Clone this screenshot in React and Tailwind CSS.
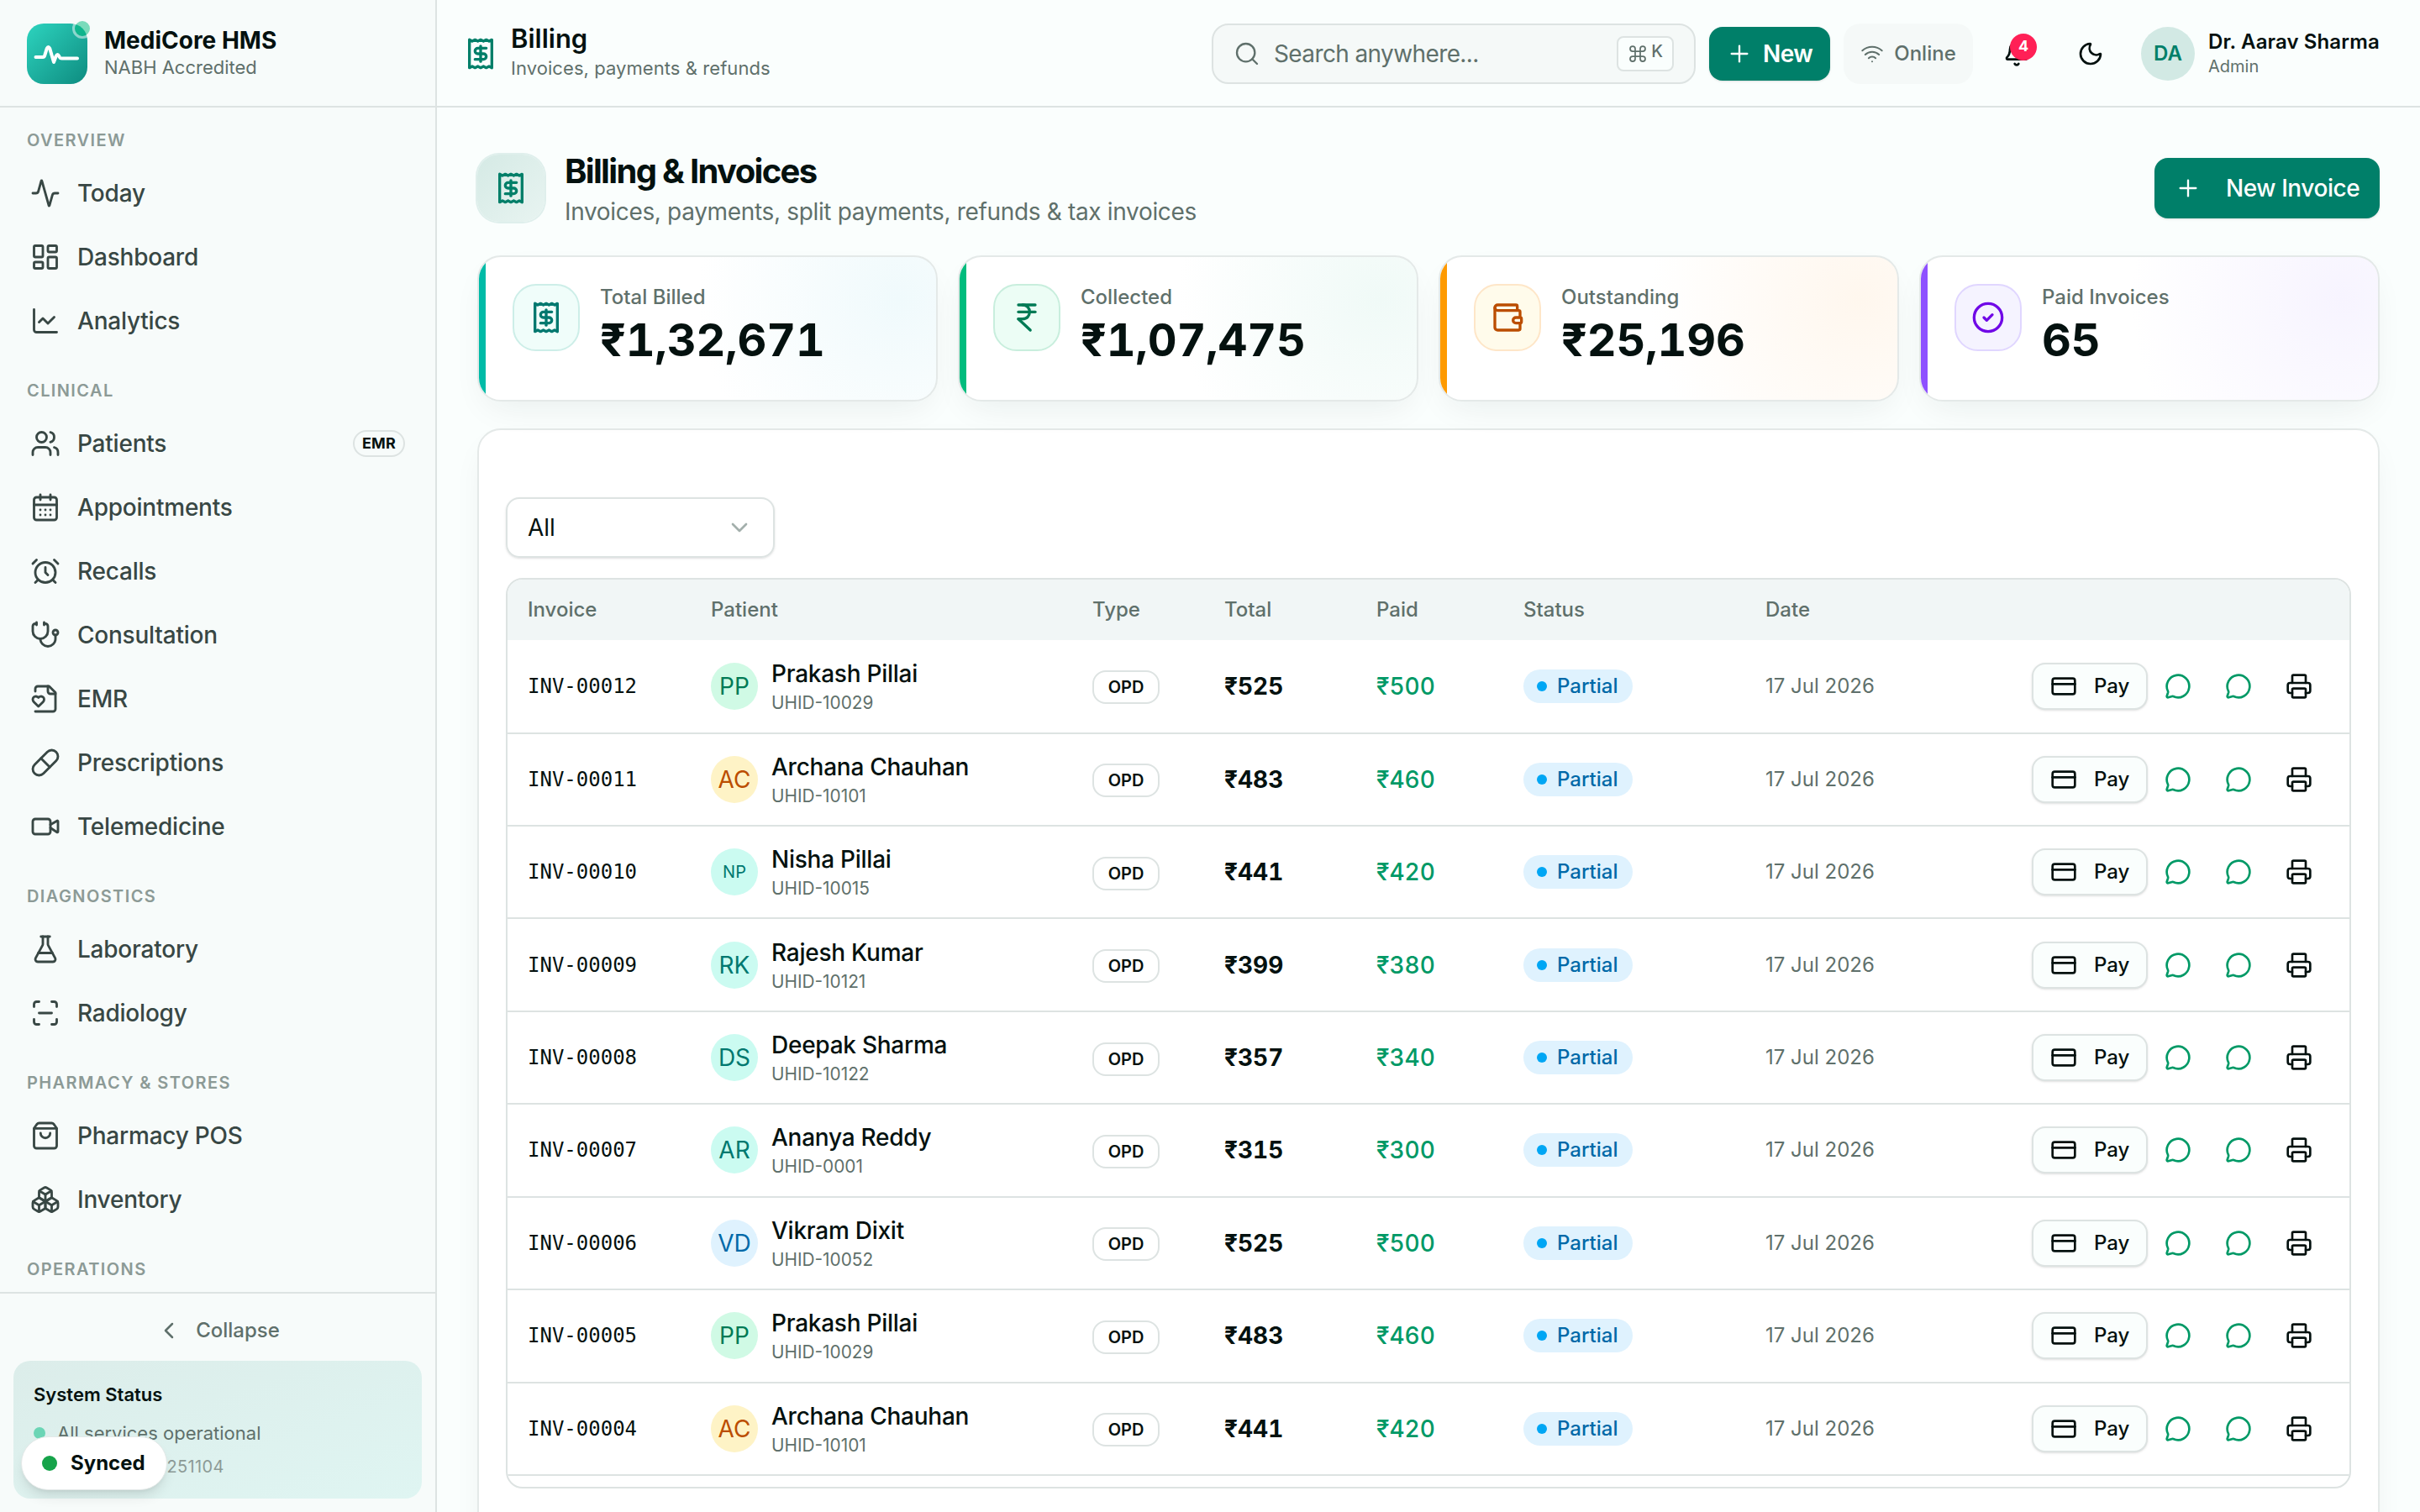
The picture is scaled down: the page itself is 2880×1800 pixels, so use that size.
import {
  Activity,
  AlarmClock,
  Bell,
  Boxes,
  CalendarDays,
  ChartLine,
  ChevronDown,
  ChevronLeft,
  CircleCheck,
  Command,
  CreditCard,
  FlaskConical,
  IndianRupee,
  LayoutDashboard,
  MessageCircle,
  Moon,
  Pill,
  Plus,
  Printer,
  Receipt,
  ScanLine,
  Search,
  Stethoscope,
  Users,
  Video,
  Wallet,
  Wifi,
} from "lucide-react";

// These two differ from the lucide versions, so they are drawn here
function FileHeart({ className, strokeWidth = 2 }) {
  return (
    <svg
      viewBox="0 0 24 24"
      fill="none"
      stroke="currentColor"
      strokeWidth={strokeWidth}
      strokeLinecap="round"
      strokeLinejoin="round"
      className={className}
    >
      <path d="M4 22h14a2 2 0 0 0 2-2V7l-5-5H6a2 2 0 0 0-2 2v2" />
      <path d="M14 2v4a2 2 0 0 0 2 2h4" />
      <path d="M10.29 10.7a2.43 2.43 0 0 0-2.66-.52c-.29.12-.56.3-.78.53l-.35.34-.35-.34a2.43 2.43 0 0 0-2.65-.53c-.3.12-.56.3-.79.53-.95.94-1 2.53.2 3.74L6.5 18l3.6-3.55c1.2-1.21 1.14-2.8.19-3.74Z" />
    </svg>
  );
}

function ShoppingBag({ className, strokeWidth = 2 }) {
  return (
    <svg
      viewBox="0 0 24 24"
      fill="none"
      stroke="currentColor"
      strokeWidth={strokeWidth}
      strokeLinecap="round"
      strokeLinejoin="round"
      className={className}
    >
      <path d="M3.1 6.2h17.8" />
      <path d="M3.4 5.5a2 2 0 0 0-.4 1.2V20a2 2 0 0 0 2 2h14a2 2 0 0 0 2-2V6.7a2 2 0 0 0-.4-1.2l-2-2.7A2 2 0 0 0 17 2H7a2 2 0 0 0-1.6.8z" />
      <path d="M15.8 10a3.8 3.8 0 0 1-7.6 0" />
    </svg>
  );
}

const NAV = [
  {
    title: "Overview",
    items: [
      { label: "Today", icon: Activity },
      { label: "Dashboard", icon: LayoutDashboard },
      { label: "Analytics", icon: ChartLine },
    ],
  },
  {
    title: "Clinical",
    items: [
      { label: "Patients", icon: Users, badge: "EMR" },
      { label: "Appointments", icon: CalendarDays },
      { label: "Recalls", icon: AlarmClock },
      { label: "Consultation", icon: Stethoscope },
      { label: "EMR", icon: FileHeart },
      { label: "Prescriptions", icon: Pill },
      { label: "Telemedicine", icon: Video },
    ],
  },
  {
    title: "Diagnostics",
    items: [
      { label: "Laboratory", icon: FlaskConical },
      { label: "Radiology", icon: ScanLine },
    ],
  },
  {
    title: "Pharmacy & Stores",
    items: [
      { label: "Pharmacy POS", icon: ShoppingBag },
      { label: "Inventory", icon: Boxes },
    ],
  },
  { title: "Operations", items: [] },
];

const STATS = [
  {
    label: "Total Billed",
    value: "₹1,32,671",
    icon: Receipt,
    bar: "bg-[#00bba7]",
    box: "bg-[#f0fdfa] border-[#cdeee8] text-[#00786f]",
    glow: "bg-[radial-gradient(circle_at_500px_50px,#f0fafc_0px,#ffffff_240px)]",
  },
  {
    label: "Collected",
    value: "₹1,07,475",
    icon: IndianRupee,
    bar: "bg-[#00bc7d]",
    box: "bg-[#ecfdf5] border-[#c8eedd] text-[#007a55]",
    glow: "bg-[radial-gradient(circle_at_500px_50px,#f0faf7_0px,#ffffff_240px)]",
  },
  {
    label: "Outstanding",
    value: "₹25,196",
    icon: Wallet,
    bar: "bg-[#fe9a00]",
    box: "bg-[#fffbeb] border-[#fee6c8] text-[#bb4d00]",
    glow: "bg-[radial-gradient(circle_at_500px_50px,#fff7ee_0px,#ffffff_250px)]",
  },
  {
    label: "Paid Invoices",
    value: "65",
    icon: CircleCheck,
    bar: "bg-[#8e51ff]",
    box: "bg-[#f5f3ff] border-[#e0d6ff] text-[#7008e7]",
    glow: "bg-[radial-gradient(circle_at_500px_50px,#f7f4ff_0px,#ffffff_250px)]",
  },
];

const GREEN = "bg-[#d0fae5] text-[#007a55]";
const AMBER = "bg-[#fef3c6] text-[#bb4d00]";
const TEAL = "bg-[#cbfbf1] text-[#00786f]";
const SKY = "bg-[#dff2fe] text-[#0069a8]";

const INVOICES = [
  { id: "INV-00012", initials: "PP", tone: GREEN, name: "Prakash Pillai", uhid: "UHID-10029", total: "₹525", paid: "₹500" },
  { id: "INV-00011", initials: "AC", tone: AMBER, name: "Archana Chauhan", uhid: "UHID-10101", total: "₹483", paid: "₹460" },
  { id: "INV-00010", initials: "NP", tone: TEAL, name: "Nisha Pillai", uhid: "UHID-10015", total: "₹441", paid: "₹420", small: true },
  { id: "INV-00009", initials: "RK", tone: TEAL, name: "Rajesh Kumar", uhid: "UHID-10121", total: "₹399", paid: "₹380" },
  { id: "INV-00008", initials: "DS", tone: TEAL, name: "Deepak Sharma", uhid: "UHID-10122", total: "₹357", paid: "₹340" },
  { id: "INV-00007", initials: "AR", tone: TEAL, name: "Ananya Reddy", uhid: "UHID-0001", total: "₹315", paid: "₹300" },
  { id: "INV-00006", initials: "VD", tone: SKY, name: "Vikram Dixit", uhid: "UHID-10052", total: "₹525", paid: "₹500" },
  { id: "INV-00005", initials: "PP", tone: GREEN, name: "Prakash Pillai", uhid: "UHID-10029", total: "₹483", paid: "₹460" },
  { id: "INV-00004", initials: "AC", tone: AMBER, name: "Archana Chauhan", uhid: "UHID-10101", total: "₹441", paid: "₹420" },
];

const COLS = "grid grid-cols-[218px_454px_157px_181px_175px_288px_300px_1fr] items-center";

function Sidebar() {
  return (
    <aside className="flex h-full w-[520px] shrink-0 flex-col border-r-2 border-[#dde3e2] bg-[#f7fbfa]">
      <div className="flex h-32 shrink-0 items-center gap-5 border-b-2 border-[#dde3e2] px-8 pt-0.5">
        <div className="relative size-[72px] rounded-[20px] bg-gradient-to-br from-[#2dd4bf] to-[#0d8c80]">
          <svg viewBox="0 0 72 72" className="size-[72px]" fill="none" stroke="#fff" strokeWidth="4" strokeLinecap="round" strokeLinejoin="round">
            <path d="M10.5 40H19q1.6 0 2.1-1.6l2.7-8.8q1.7-3.4 3.4 0L32 46l2.7-7.3q1.8-3.2 3.5 0l.7 1.4q.8 1.5 2.6 1.5H60" />
          </svg>
          <span className="absolute -right-1.5 -top-1.5 size-6 rounded-full border-[3px] border-[#f7fbfa] bg-[#00bc7d] opacity-50" />
        </div>
        <div className="pb-0.5">
          <p className="text-[28px] font-bold leading-[34px]">MediCore HMS</p>
          <p className="text-[22px] leading-[30px] text-[#5f706b]">NABH Accredited</p>
        </div>
      </div>

      <nav className="min-h-0 flex-1 overflow-hidden px-4 pt-5">
        {NAV.map((group) => (
          <div key={group.title} className="mb-7">
            <p className="mb-2 flex h-[38px] items-center px-4 text-[20px] font-semibold uppercase tracking-[0.07em] text-[#8c9a96]">
              {group.title}
            </p>
            <div className="flex flex-col gap-1">
              {group.items.map(({ label, icon: Icon, badge }) => (
                <a
                  key={label}
                  className="flex h-[72px] items-center gap-5 pl-5 pr-5 text-[28px] font-medium tracking-[-0.008em] text-[#384744]"
                >
                  <Icon className="size-9" strokeWidth={1.9} />
                  <span>{label}</span>
                  {badge && (
                    <span className="ml-auto rounded-full border-2 border-[#dde3e2] px-[9px] text-[18px] font-bold leading-7 tracking-[0.01em] text-[#04110f]">
                      {badge}
                    </span>
                  )}
                </a>
              ))}
            </div>
          </div>
        ))}
      </nav>

      <div className="flex h-[262px] shrink-0 flex-col border-t-2 border-[#dde3e2] px-4 pb-4">
        <button className="flex h-20 shrink-0 items-center justify-center gap-4 pt-2 text-[24px] font-medium text-[#5f706b]">
          <ChevronLeft className="size-8" strokeWidth={1.9} />
          Collapse
        </button>
        <div className="h-[164px] rounded-[20px] bg-gradient-to-br from-[#dcedea] to-[#dff5f2] px-6 pt-6">
          <p className="text-[22px] font-semibold leading-8">System Status</p>
          <p className="mt-3.5 flex items-center gap-3.5 text-[22px] leading-8 text-[#5f706b]">
            <span className="size-3.5 rounded-full bg-[#6bd5b5]" />
            All services operational
          </p>
          <p className="mt-2 text-[20px] leading-8 tracking-[0.017em] text-[#8c9a96]">v2.4.0 · build 20251104</p>
        </div>
      </div>
    </aside>
  );
}

function Topbar() {
  return (
    <header className="flex h-32 shrink-0 items-center border-b-2 border-[#dde3e2] pl-8 pr-12 pt-0.5">
      <Receipt className="size-10 text-[#007f69]" />
      <div className="ml-4 pb-0.5">
        <p className="text-[31px] font-semibold leading-[36px]">Billing</p>
        <p className="text-[22px] leading-[34px] tracking-[0.003em] text-[#5f706b]">Invoices, payments &amp; refunds</p>
      </div>

      <div className="ml-auto flex h-[72px] w-[576px] items-center rounded-[20px] border-2 border-[#dde3e2] bg-[#f5f9f8] pl-6 pr-6 text-[#5f706b]">
        <Search className="size-8" strokeWidth={1.75} />
        <span className="ml-4 text-[28px] tracking-[-0.022em]">Search anywhere...</span>
        <span className="ml-auto flex h-[42px] w-[68px] items-center justify-center gap-1 rounded-lg border-2 border-[#dde3e2] bg-[#fafefd] text-[20px] font-medium">
          <Command className="size-6" strokeWidth={1.75} />
          <span className="pb-1.5">K</span>
        </span>
      </div>
      <button className="ml-4 flex h-16 w-36 items-center gap-3 rounded-2xl bg-[#007f69] pl-5 text-[28px] font-semibold tracking-[-0.02em] text-white shadow-sm">
        <Plus className="size-8" strokeWidth={1.75} />
        New
      </button>
      <div className="ml-4 flex h-[72px] w-[154px] items-center justify-center gap-3 rounded-[20px] bg-[#f5f9f8] text-[24px] font-medium text-[#5f706b]">
        <Wifi className="size-7" strokeWidth={1.75} />
        Online
      </div>
      <div className="relative ml-4 flex size-[72px] items-center justify-center">
        <Bell className="size-8" />
        <span className="absolute right-3 top-3 flex size-8 items-center justify-center rounded-full bg-[#ff2056] pb-1 text-[18px] font-bold text-white">
          4
        </span>
      </div>
      <div className="ml-4 flex size-[72px] items-center justify-center">
        <Moon className="size-8" />
      </div>
      <div className="ml-6 flex items-center gap-4">
        <span className="flex size-16 items-center justify-center rounded-full bg-[#d2e9e4] text-[24px] font-semibold text-[#007f69]">
          DA
        </span>
        <div className="w-[204px]">
          <p className="whitespace-nowrap text-[24px] font-semibold leading-[30px] tracking-[0.005em]">Dr. Aarav Sharma</p>
          <p className="text-[20px] leading-7 text-[#5f706b]">Admin</p>
        </div>
      </div>
    </header>
  );
}

function StatCard({ label, value, icon: Icon, bar, box, glow }) {
  return (
    <div className={`relative flex h-[174px] gap-6 overflow-hidden rounded-[28px] border-2 border-[#e4e9e8] pl-10 pt-8 ${glow}`}>
      <span className={`absolute inset-y-0 left-0 w-2 ${bar}`} />
      <span className={`flex size-20 items-center justify-center rounded-[28px] border-2 ${box}`}>
        <Icon className="size-10" />
      </span>
      <div>
        <p className="text-[24px] font-medium leading-8 text-[#5f706b]">{label}</p>
        <p className="mt-[3px] text-[54px] font-bold leading-[64px] tracking-[-0.003em] tabular-nums">{value}</p>
      </div>
    </div>
  );
}

function InvoiceRow({ row, height }) {
  return (
    <div className={`${COLS} ${height} border-b-2 border-[#dde3e2]`}>
      <span className="pl-6 font-['DejaVu_Sans_Mono',monospace] text-[24px]">{row.id}</span>
      <div className="flex items-center gap-4 pl-6">
        <span className={`flex size-14 items-center justify-center rounded-full ${row.tone} ${row.small ? "text-[20px]" : "text-[28px]"}`}>
          {row.initials}
        </span>
        <div className="pt-1">
          <p className="text-[28px] font-medium leading-9 tracking-[-0.009em]">{row.name}</p>
          <p className="text-[20.8px] leading-[34px] text-[#5f706b]">{row.uhid}</p>
        </div>
      </div>
      <div className="pl-6 pt-[3px]">
        <span className="flex h-10 w-20 items-center justify-center rounded-2xl border-2 border-[#dde3e2] text-[20px] font-semibold">
          OPD
        </span>
      </div>
      <span className="pl-6 text-[28px] font-bold tabular-nums">{row.total}</span>
      <span className="pl-6 text-[28px] font-medium tabular-nums text-[#009966]">{row.paid}</span>
      <div className="pl-6">
        <span className="flex h-10 w-[130px] items-center gap-3 rounded-full bg-[#dff2fe] pl-4 text-[24px] font-medium text-[#0069a8]">
          <span className="size-3 rounded-full bg-[#00a6f4]" />
          Partial
        </span>
      </div>
      <span className="pl-6 text-[24px] text-[#5f706b]">17 Jul 2026</span>
      <div className="flex items-center justify-end pr-6">
        <button className="flex h-14 w-[138px] items-center gap-5 rounded-2xl border-2 border-[#dde3e2] bg-[#fafefd] pl-5 text-[24px] font-medium shadow-sm">
          <CreditCard className="size-8" />
          Pay
        </button>
        <span className="flex w-[72px] justify-center text-[#009966]">
          <MessageCircle className="size-8" />
        </span>
        <span className="flex w-[72px] justify-center text-[#009966]">
          <MessageCircle className="size-8" />
        </span>
        <span className="flex w-[72px] justify-center">
          <Printer className="size-8" />
        </span>
      </div>
    </div>
  );
}

export default function App() {
  return (
    <div className="relative flex h-[1800px] w-[2880px] overflow-hidden bg-[#fafefd] font-['Inter',sans-serif] text-[#04110f]">
      <Sidebar />

      <div className="flex min-w-0 flex-1 flex-col">
        <Topbar />

        <main className="min-h-0 flex-1 overflow-hidden px-12 pt-14">
          {/* Page heading */}
          <div className="flex h-20 items-center">
            <span className="flex size-20 items-center justify-center rounded-[26px] bg-gradient-to-br from-[#d5eae5] to-[#e8f4f1] ring-2 ring-[#dfefec]">
              <Receipt className="size-10 text-[#007f69]" />
            </span>
            <div className="ml-6 pt-2">
              <h1 className="text-[40px] font-bold leading-[48px] tracking-[-0.042em]">Billing &amp; Invoices</h1>
              <p className="text-[28px] leading-[48px] tracking-[-0.012em] text-[#5f706b]">
                Invoices, payments, split payments, refunds &amp; tax invoices
              </p>
            </div>
            <button className="ml-auto flex h-[72px] w-[268px] items-center gap-[29px] rounded-2xl bg-[#007f69] pl-6 text-[28px] font-medium tracking-[-0.015em] text-white shadow-sm">
              <Plus className="size-8" strokeWidth={1.75} />
              New Invoice
            </button>
          </div>

          {/* Stats */}
          <div className="mt-10 grid grid-cols-4 gap-6">
            {STATS.map((stat) => (
              <div key={stat.label} className="rounded-[28px] shadow-[0_16px_40px_-12px_rgba(10,40,35,0.08)]">
                <StatCard {...stat} />
              </div>
            ))}
          </div>

          {/* Invoice list */}
          <section className="mt-8 h-[1400px] rounded-[28px] border-2 border-[#e4e9e8] bg-white px-8 pt-20 shadow-[0_16px_40px_-12px_rgba(10,40,35,0.08)]">
            <div className="flex h-[72px] w-80 items-center justify-between rounded-2xl border-2 border-[#dde3e2] px-6 text-[28px] shadow-sm">
              All
              <ChevronDown className="size-8 text-[#a3afac]" />
            </div>

            <div className="mt-6 h-[1084px] overflow-hidden rounded-[20px] border-2 border-[#dde3e2]">
              <div className={`${COLS} h-[72px] bg-[#f1f6f6] text-[24px] font-medium text-[#5f706b]`}>
                <span className="pl-6">Invoice</span>
                <span className="pl-6">Patient</span>
                <span className="pl-6">Type</span>
                <span className="pl-6">Total</span>
                <span className="pl-6">Paid</span>
                <span className="pl-6">Status</span>
                <span className="pl-6">Date</span>
              </div>
              {INVOICES.map((row, i) => (
                <InvoiceRow key={row.id} row={row} height={i === 0 ? "h-[111.5px]" : "h-[110.45px]"} />
              ))}
            </div>
          </section>
        </main>
      </div>

      {/* Sync indicator */}
      <div className="absolute bottom-[26px] left-[25px] flex h-16 w-[174px] items-center gap-4 rounded-full border border-[#e4e9e8] bg-white pl-6 text-[24px] font-bold shadow-lg">
        <span className="size-[18px] rounded-full bg-[#16a34a]" />
        Synced
      </div>
    </div>
  );
}
